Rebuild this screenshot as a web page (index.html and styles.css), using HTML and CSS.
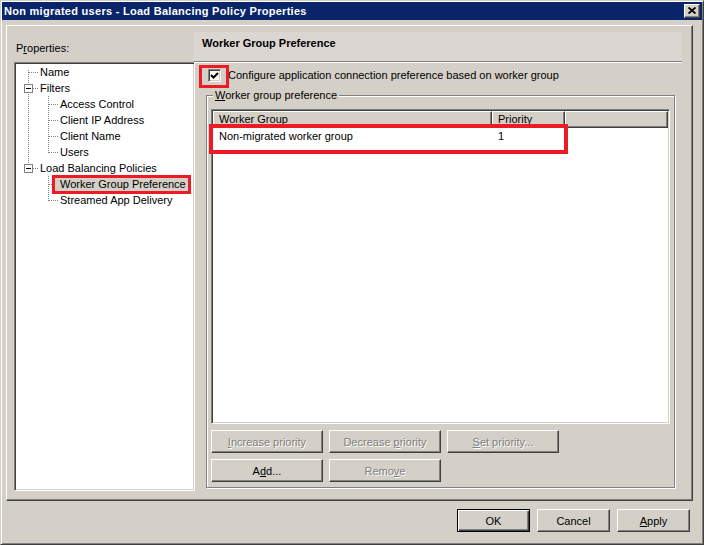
FILE: index.html
```html
<!DOCTYPE html>
<html lang="en">
<head>
<meta charset="UTF-8">
<title>Load Balancing Policy Properties</title>
<link rel="stylesheet" href="styles.css">
</head>
<body>

<div class="window">

<div class="titlebar">
    <span class="title">Non migrated users - Load Balancing Policy Properties</span>
    <span class="close">
        <svg width="8" height="7" viewBox="0 0 8 7"><path d="M0.5 0.5L7.5 6.5M7.5 0.5L0.5 6.5" stroke="#000" stroke-width="1.8"/></svg>
    </span>
</div>

<div class="panel">

<div class="side">
    <div class="side-label">P<u>r</u>operties:</div>
    <div class="tree">
        <div class="node"><span class="g first"></span><span class="lbl">Name</span></div>
        <div class="node"><span class="g mid"><span class="box"></span></span><span class="lbl">Filters</span></div>
        <div class="node"><span class="g pass"></span><span class="g mid"></span><span class="lbl">Access Control</span></div>
        <div class="node"><span class="g pass"></span><span class="g mid"></span><span class="lbl">Client IP Address</span></div>
        <div class="node"><span class="g pass"></span><span class="g mid"></span><span class="lbl">Client Name</span></div>
        <div class="node"><span class="g pass"></span><span class="g last"></span><span class="lbl">Users</span></div>
        <div class="node"><span class="g last"><span class="box"></span></span><span class="lbl">Load Balancing Policies</span></div>
        <div class="node"><span class="g"></span><span class="g mid"></span><span class="lbl sel">Worker Group Preference</span></div>
        <div class="node"><span class="g"></span><span class="g last"></span><span class="lbl">Streamed App Delivery</span></div>
    </div>
</div>

<div class="content">
    <div class="page-head">Worker Group Preference</div>

    <div class="check-row">
        <span class="check">
            <svg width="9" height="9" viewBox="0 0 9 9"><path d="M1 4L3.5 6.5L8 2" fill="none" stroke="#000" stroke-width="2"/></svg>
        </span>
        <span class="check-text">Configure application connection preference based on worker group</span>
    </div>

    <fieldset class="group">
        <legend><u>W</u>orker group preference</legend>

        <div class="list">
            <div class="list-head">
                <span class="hcell col-name">Worker Group</span>
                <span class="hcell col-prio">Priority</span>
                <span class="hcell col-fill"></span>
            </div>
            <div class="list-row marked">
                <span class="col-name">Non-migrated worker group</span>
                <span class="col-prio">1</span>
            </div>
        </div>

        <div class="btn-row">
            <button class="btn wide off"><u>I</u>ncrease priority</button>
            <button class="btn wide off">Decrease <u>p</u>riority</button>
            <button class="btn wide off"><u>S</u>et priority...</button>
        </div>
        <div class="btn-row">
            <button class="btn wide">A<u>d</u>d...</button>
            <button class="btn wide off">Remo<u>v</u>e</button>
        </div>
    </fieldset>
</div>

</div>

<div class="footer">
    <button class="btn default">OK</button>
    <button class="btn">Cancel</button>
    <button class="btn"><u>A</u>pply</button>
</div>

</div>

</body>
</html>
```

FILE: styles.css
```css
*,*::after{
    box-sizing:border-box;
}

body{
    margin:0;
    font-family:"Liberation Sans",Arial,sans-serif;
    font-size:11px;
    color:#000;
    background:#d4d0c8;
}

.window{
    width:704px;
    height:545px;
    padding:1px;
    border:1px solid;
    border-color:#d4d0c8 #404040 #404040 #d4d0c8;
    box-shadow:inset 1px 1px #fff,inset -1px -1px #808080;
    background:#d4d0c8;
}

.titlebar{
    height:18px;
    background:#0a246a;
    display:flex;
    align-items:center;
    justify-content:space-between;
    padding:0 2px 0 2px;
}

.title{
    color:#fff;
    font-weight:bold;
    font-size:11px;
    letter-spacing:0.28px;
}

.close{
    width:16px;
    height:14px;
    background:#d4d0c8;
    border:1px solid;
    border-color:#fff #404040 #404040 #fff;
    box-shadow:inset -1px -1px #808080;
    display:flex;
    align-items:center;
    justify-content:center;
    padding-bottom:1px;
}

/* main property sheet */

.panel{
    margin:5px 0 0 4px;
    width:687px;
    height:476px;
    border:1px solid;
    border-color:#fff #404040 #404040 #fff;
    box-shadow:inset -1px -1px #808080;
    display:flex;
}

.side{
    width:188px;
    flex:none;
    padding-left:7px;
}

.side-label{
    padding:16px 0 0 2px;
    line-height:13px;
    margin-bottom:7px;
}

.tree{
    width:181px;
    height:429px;
    background:#fff;
    border:1px solid;
    border-color:#808080 #fff #fff #808080;
    box-shadow:inset 1px 1px #404040,inset -1px -1px #d4d0c8;
    padding:1px 0 0 5px;
}

.node{
    display:flex;
    align-items:center;
    height:16px;
    white-space:nowrap;
}

.g{
    width:20px;
    height:16px;
    flex:none;
    display:flex;
    align-items:center;
    background-repeat:no-repeat;
}

.g.first{
    background-image:repeating-linear-gradient(#808080 0 1px,transparent 1px 2px),repeating-linear-gradient(to right,#808080 0 1px,transparent 1px 2px);
    background-size:1px 10px,10px 1px;
    background-position:8px 6px,9px 8px;
}

.g.mid{
    background-image:repeating-linear-gradient(#808080 0 1px,transparent 1px 2px),repeating-linear-gradient(to right,#808080 0 1px,transparent 1px 2px);
    background-size:1px 16px,10px 1px;
    background-position:8px 0,9px 8px;
}

.g.last{
    background-image:repeating-linear-gradient(#808080 0 1px,transparent 1px 2px),repeating-linear-gradient(to right,#808080 0 1px,transparent 1px 2px);
    background-size:1px 9px,10px 1px;
    background-position:8px 0,9px 8px;
}

.g.pass{
    background-image:repeating-linear-gradient(#808080 0 1px,transparent 1px 2px);
    background-size:1px 16px;
    background-position:8px 0;
}

.box{
    width:9px;
    height:9px;
    margin-left:4px;
    border:1px solid #808080;
    background:#fff;
    display:flex;
    align-items:center;
    justify-content:center;
}

.box::after{
    content:"";
    width:5px;
    height:1px;
    background:#000;
}

.lbl{
    line-height:13px;
}

.lbl.sel{
    margin-left:-5px;
    padding:0 2px 0 5px;
    background:#d4d0c8;
    outline:3px solid #ed1c24;
}

/* right side */

.content{
    flex:1;
}

.page-head{
    margin:6px 10px 0 -1px;
    height:30px;
    padding:5px 0 0 8px;
    line-height:13px;
    font-weight:bold;
    background:#dcd6d3;
    border-bottom:1px solid #808080;
    box-shadow:0 1px #fff;
}

.check-row{
    display:flex;
    align-items:center;
    height:24px;
    margin-top:1px;
}

.check{
    position:relative;
    width:13px;
    height:13px;
    margin-left:13px;
    background:#fff;
    border:1px solid;
    border-color:#808080 #fff #fff #808080;
    box-shadow:inset 1px 1px #404040,inset -1px -1px #d4d0c8;
    display:flex;
    align-items:center;
    justify-content:center;
}

.check::after{
    content:"";
    position:absolute;
    left:-10px;
    right:-9px;
    top:-5px;
    bottom:-7px;
    border:3px solid #ed1c24;
}

.check-text{
    margin-left:7px;
}

.group{
    margin:2px 0 0 11px;
    width:469px;
    min-width:0;
    padding:7px 3px 5px 4px;
    border:1px solid #808080;
    box-shadow:inset 1px 1px #fff,1px 1px #fff;
}

.group legend{
    margin-left:2px;
    padding:0 2px;
    line-height:13px;
    background:#d4d0c8;
}

.list{
    width:459px;
    height:315px;
    background:#fff;
    border:1px solid;
    border-color:#808080 #fff #fff #808080;
    box-shadow:inset 1px 1px #404040,inset -1px -1px #d4d0c8;
    padding:1px;
}

.list-head{
    display:flex;
    height:17px;
}

.hcell{
    height:17px;
    line-height:15px;
    padding-left:5px;
    background:#d4d0c8;
    border:1px solid;
    border-color:#fff #404040 #404040 #fff;
    box-shadow:inset -1px -1px #808080;
}

.col-name{
    width:279px;
    flex:none;
}

.col-prio{
    width:73px;
    flex:none;
}

.col-fill{
    width:103px;
    flex:none;
}

.list-row{
    display:flex;
    height:16px;
    line-height:16px;
}

.list-row span{
    padding-left:6px;
}

.marked{
    position:relative;
}

.marked::after{
    content:"";
    position:absolute;
    left:-4px;
    top:-4px;
    width:359px;
    height:30px;
    border:4px solid #ed1c24;
}

.btn-row{
    display:flex;
    gap:6px;
    margin-top:6px;
}

.btn-row:first-of-type{
    margin-top:7px;
}

.btn{
    width:73px;
    height:23px;
    padding:0;
    font:inherit;
    color:#000;
    background:#d4d0c8;
    border:1px solid;
    border-color:#fff #404040 #404040 #fff;
    box-shadow:inset -1px -1px #808080;
}

.btn.wide{
    width:112px;
}

.btn.off{
    color:#808080;
    text-shadow:1px 1px #fff;
}

.btn.default{
    border-color:#000;
    box-shadow:inset 1px 1px #fff,inset -1px -1px #404040,inset -2px -2px #808080;
}

.footer{
    display:flex;
    justify-content:flex-end;
    gap:7px;
    margin-top:8px;
    padding-right:12px;
}
```
